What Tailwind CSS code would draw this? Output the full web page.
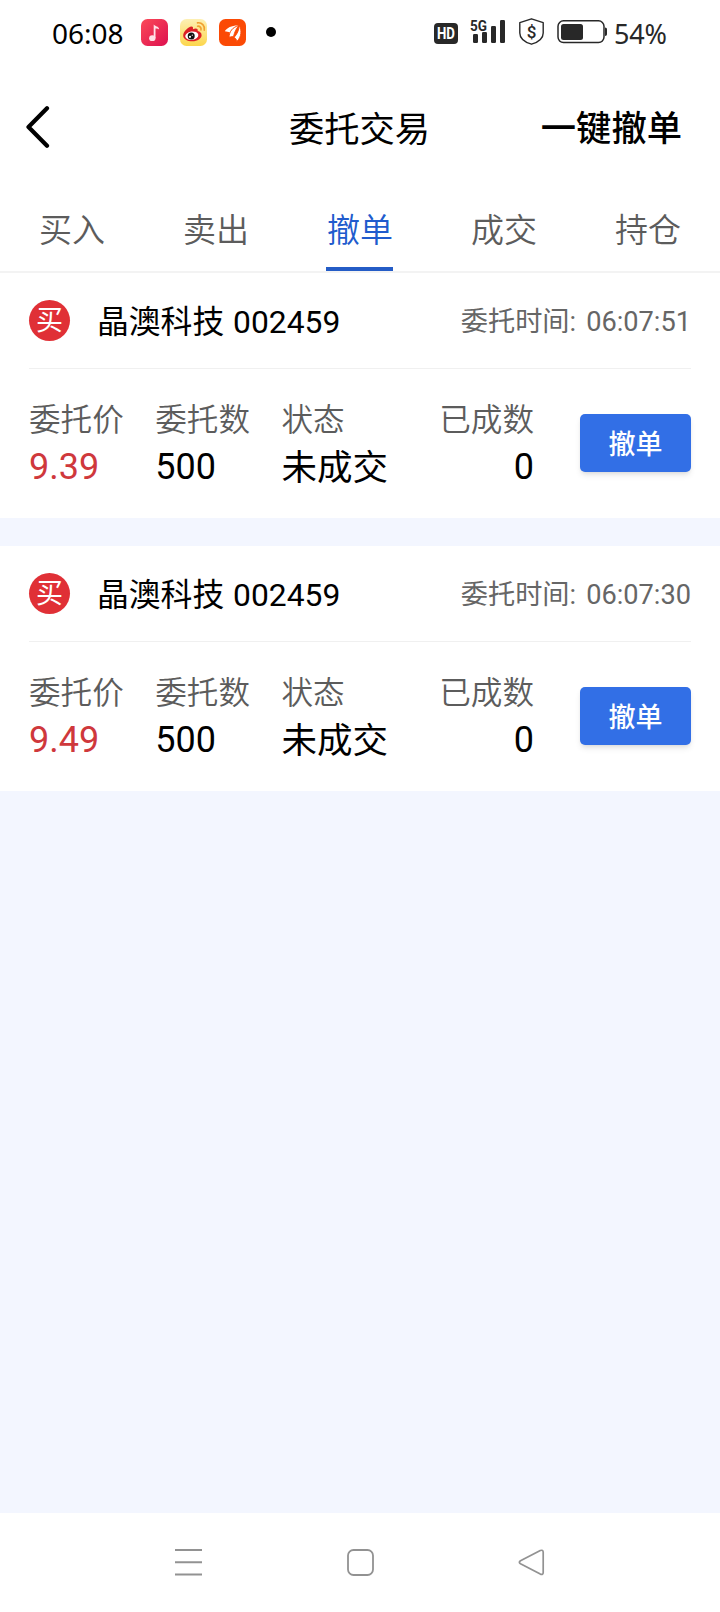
<!DOCTYPE html>
<html lang="zh-CN">
<head>
  <meta charset="UTF-8" />
  <meta name="viewport" content="width=device-width, initial-scale=1.0"/>
  <title>委托交易</title>
  <script src="https://cdn.jsdelivr.net/npm/@tailwindcss/browser@4"></script>
  <style>
    body {
      font-family: Roboto, 'Noto Sans CJK SC', sans-serif;
    }
  </style>
</head>
<body class="bg-[#f3f6ff] h-[1612px] flex flex-col text-black overflow-hidden">

  <!-- Status bar -->
  <div class="h-16 shrink-0 bg-white flex items-center justify-between pl-[52px] pr-[52px] font-['Noto_Sans']">
    <div class="flex items-center">
      <span class="w-[89px] pt-px text-[28px] leading-none whitespace-nowrap">06:08</span>
      <svg class="size-[27px] mr-3" viewBox="0 0 27 27">
        <defs>
          <linearGradient id="music" x1="0" y1="0" x2="1" y2="1">
            <stop offset="0" stop-color="#fb4a58"/>
            <stop offset="1" stop-color="#dd1050"/>
          </linearGradient>
        </defs>
        <rect width="27" height="27" rx="6.5" fill="url(#music)"/>
        <ellipse cx="11.3" cy="19.2" rx="3.2" ry="2.9" fill="#ffe0e6"/>
        <path d="M12.700 19V5.600c1 1.900 5.400 1.500 5.400 4.900-.8-.9-2-1.100-3.600-1.100V19" fill="#ffe0e6"/>
      </svg>
      <svg class="size-[27px] mr-3" viewBox="0 0 27 27">
        <defs>
          <linearGradient id="weibo" x1="0" y1="0" x2="0" y2="1">
            <stop offset="0" stop-color="#fdf0b4"/>
            <stop offset="1" stop-color="#fcd64c"/>
          </linearGradient>
        </defs>
        <rect width="27" height="27" rx="6.500" fill="url(#weibo)"/>
        <path d="M3.200 16.500c0-3.500 5-9 8.300-9 1.600 0 1.700 1.300 1.400 2.700 2.600-1.200 5.400-1.100 4.800 1.900 2.300.6 3.900 1.700 3.900 4.100 0 3.200-4.100 6.100-9.200 6.100s-9.200-2.300-9.200-5.800z" fill="#dc1f26"/>
        <ellipse cx="11.800" cy="16.700" rx="6.600" ry="4.200" transform="rotate(-8 11.800 16.700)" fill="#fff"/>
        <circle cx="11.200" cy="16.900" r="3.500" fill="#111"/>
        <circle cx="10" cy="17.800" r="1.100" fill="#fff"/>
        <circle cx="12.300" cy="16.200" r=".6" fill="#fff"/>
        <path d="M17.600 7.200c2.200-.3 3.900 1.500 3.400 3.700M17.500 3.900c4.300-.7 7.700 2.800 6.800 7.200" fill="none" stroke="#f0a030" stroke-width="1.600" stroke-linecap="round"/>
      </svg>
      <svg class="size-[27px] mr-[20px]" viewBox="0 0 27 27">
        <rect width="27" height="27" rx="6.500" fill="#fb4a05"/>
        <path d="M5.800 12.200C8 8.500 13 6.200 19.500 6.400c-4.500 1.400-7 3.700-8.700 7.200-1.600-.9-3.200-1.300-5-1.400z" fill="#fff"/>
        <path d="M10.200 18.600c-.2-5.800 3.200-10.400 9.600-12-2.700 3.200-4.300 6.600-5.300 11-1.500-.2-2.900.1-4.300 1z" fill="#fff" stroke="#fb4a05" stroke-width=".9"/>
        <path d="M17.800 22.500c-.2-1.900-1-3.100-2.700-4.100 3.200-3.500 4.900-7.300 5.100-12 2.700 4.500 2.500 11.500-2.400 16.100z" fill="#fff" stroke="#fb4a05" stroke-width=".9"/>
      </svg>
      <span class="size-[10px] rounded-full bg-black"></span>
    </div>

    <div class="flex items-center text-[#282828]">
      <svg class="w-[174px] h-[32px]" viewBox="434 16 174 32" fill="currentColor">
        <!-- HD -->
        <rect x="434" y="23" width="24" height="21" rx="4"/>
        <text x="446" y="39" text-anchor="middle" font-family="Roboto" font-weight="700" font-size="16" textLength="18" lengthAdjust="spacingAndGlyphs" fill="#fff">HD</text>
        <!-- Signal -->
        <text x="470" y="30.500" font-family="Roboto" font-weight="700" font-size="15.500" textLength="17" lengthAdjust="spacingAndGlyphs">5G</text>
        <rect x="473" y="34" width="5" height="9" rx="1.200"/>
        <rect x="482" y="32" width="5" height="11" rx="1.200"/>
        <rect x="491" y="26" width="5" height="17" rx="1.200"/>
        <rect x="500" y="20" width="5" height="23" rx="1.200"/>
        <!-- Payment shield -->
        <path d="M531.500 18.800l11.700 3.900v10.200c0 5.300-5 9.200-11.700 11.300-6.700-2.100-11.700-6-11.700-11.300V22.700z" fill="none" stroke="currentColor" stroke-width="1.400" stroke-linejoin="round"/>
        <text x="531.500" y="37.500" text-anchor="middle" font-family="Roboto" font-weight="500" font-size="17">$</text>
        <!-- Battery -->
        <rect x="558" y="20.800" width="46" height="21.800" rx="5.500" fill="none" stroke="currentColor" stroke-width="1.500"/>
        <rect x="561" y="24" width="22" height="16" rx="2.500"/>
        <path d="M605 27.500c1.300 0 2 .8 2 2v4.500c0 1.200-.7 2-2 2z"/>
      </svg>
      <span class="ml-[6px] w-[54px] pt-[3px] text-[27px] leading-none whitespace-nowrap tracking-[-0.2px]">54%</span>
    </div>
  </div>

  <!-- Header -->
  <header class="h-[129px] shrink-0 bg-white grid grid-cols-3 items-center pl-[26px] pr-[38px]">
    <svg class="w-6 h-[42px] mb-[3px]" viewBox="0 0 24 42" fill="none" stroke="#000" stroke-width="4.200" stroke-linecap="round" stroke-linejoin="round">
      <path d="M21 2.300L2.500 21 21 39.700"/>
    </svg>
    <h1 class="pt-1 text-[35.300px] leading-none text-center whitespace-nowrap pl-[11px]">委托交易</h1>
    <button class="pt-[3px] text-[35.300px] leading-none font-medium text-right whitespace-nowrap">一键撤单</button>
  </header>

  <!-- Tabs -->
  <nav class="h-20 shrink-0 bg-white border-b-2 border-[#f3f3f3] grid grid-cols-5 text-[33px] leading-none font-[350] text-[#5c5c5c]">
    <a class="flex justify-center pt-[21px]">买入</a>
    <a class="flex justify-center pt-[21px]">卖出</a>
    <a class="flex justify-center pt-[21px] relative text-[#205bcd]">撤单
      <span class="absolute bottom-0 left-[38px] w-[67px] h-1 bg-[#245cc6]"></span>
    </a>
    <a class="flex justify-center pt-[21px]">成交</a>
    <a class="flex justify-center pt-[21px]">持仓</a>
  </nav>

  <main id="orderList" class="flex-1 flex flex-col gap-7"></main>

  <!-- System navigation -->
  <footer class="h-[99px] shrink-0 bg-white flex items-center justify-between px-[174px] pb-px">
    <svg class="size-[29px]" viewBox="0 0 29 29" stroke="#929292" stroke-width="2">
      <path d="M1 2h27M1 14.300h27M1 26.500h27"/>
    </svg>
    <svg class="size-[29px]" viewBox="0 0 29 29" fill="none" stroke="#929292" stroke-width="1.800">
      <rect x="2" y="2" width="25" height="25" rx="5.500"/>
    </svg>
    <svg class="size-[29px]" viewBox="0 0 29 29" fill="none" stroke="#929292" stroke-width="1.700" stroke-linejoin="round">
      <path d="M3.500 12.800L23.300 2.500Q26.200 1.500 26.200 4.200V24.400Q26.200 27.100 23.300 26.100L3.500 15.800Q1.200 14.300 3.500 12.800z"/>
    </svg>
  </footer>

  <script>
    const orders = [
      { name: "晶澳科技", code: "002459", time: "06:07:51", price: "9.39", amount: 500, status: "未成交", done: 0 },
      { name: "晶澳科技", code: "002459", time: "06:07:30", price: "9.49", amount: 500, status: "未成交", done: 0 }
    ];
    const list = document.getElementById("orderList");

    orders.forEach((order) => {
      const card = document.createElement("section");
      card.className = "h-[245px] bg-white px-[29px]";

      card.innerHTML = `
        <div class="h-24 flex items-center border-b border-[#f0f0f0]">
          <span class="size-[41px] pt-[2px] rounded-full bg-[#e03036] text-white text-[27px] leading-none flex items-center justify-center">买</span>
          <h3 class="ml-[27px] pt-[5px] text-[31.800px] leading-none whitespace-nowrap">${order.name} <span class="ml-px">${order.code}</span></h3>
          <p class="ml-auto pt-[5px] flex gap-[10px] text-[27.200px] leading-none text-[#666] whitespace-nowrap"><span>委托时间:</span><span>${order.time}</span></p>
        </div>
        <div class="flex pt-[29px]">
          <dl class="w-[505px] grid grid-cols-4 text-[36px] leading-[47px] whitespace-nowrap">
            <div><dt class="text-[31.600px] leading-[46px] font-[350] text-[#5c5c5c]">委托价</dt><dd class="text-[#cf383c]">${order.price}</dd></div>
            <div><dt class="text-[31.600px] leading-[46px] font-[350] text-[#5c5c5c]">委托数</dt><dd>${order.amount}</dd></div>
            <div><dt class="text-[31.600px] leading-[46px] font-[350] text-[#5c5c5c]">状态</dt><dd class="pt-px text-[35.500px]">${order.status}</dd></div>
            <div class="text-right"><dt class="text-[31.600px] leading-[46px] font-[350] text-[#5c5c5c]">已成数</dt><dd>${order.done}</dd></div>
          </dl>
          <button class="ml-auto mt-[16px] pt-[4px] w-[111px] h-[58px] rounded-[5px] bg-[#326fe6] text-white text-[27px] leading-none font-medium shadow-md">撤单</button>
        </div>
      `;

      list.appendChild(card);
    });
  </script>

</body>
</html>
